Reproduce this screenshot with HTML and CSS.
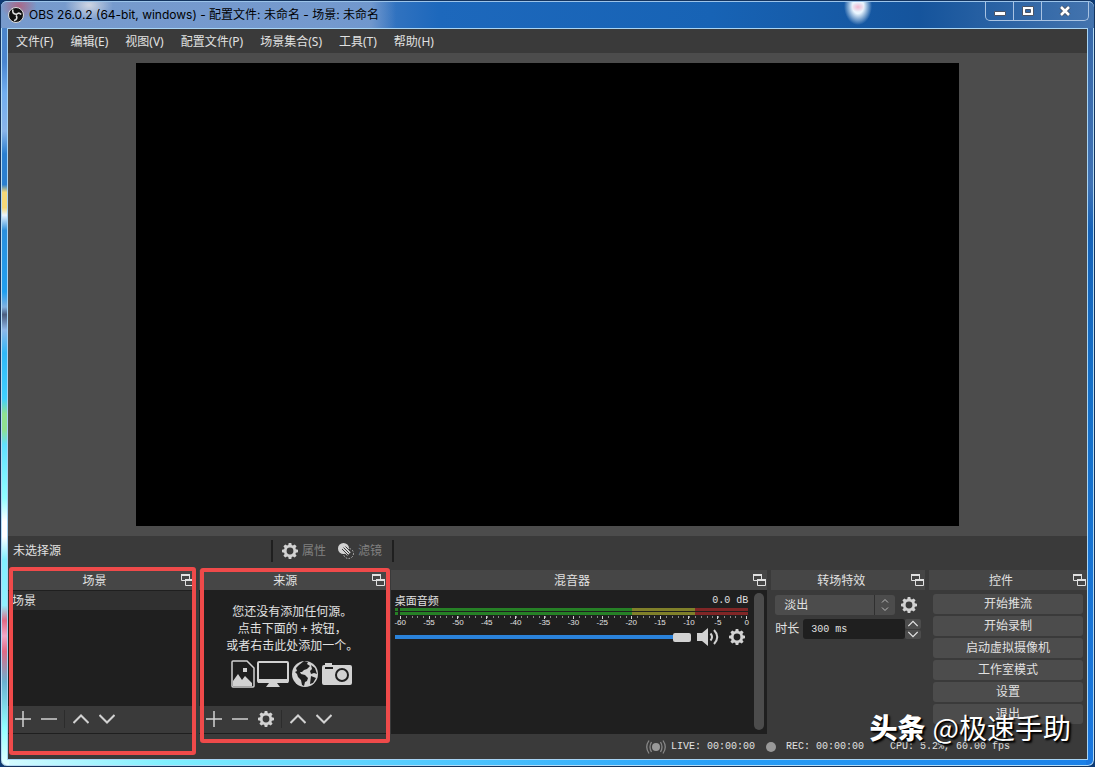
FILE: index.html
```html
<!DOCTYPE html>
<html lang="zh-CN">
<head>
  <meta charset="UTF-8" />
  <meta name="viewport" content="width=device-width, initial-scale=1" />
  <title>OBS 26.0.2 (64-bit, windows)</title>
  <link rel="stylesheet" href="styles.css">
</head>
<body>

  <!-- shared icons -->
  <svg class="sprite" aria-hidden="true">
    <symbol id="gear" viewBox="0 0 16 16">
      <path fill="currentColor" fill-rule="evenodd" d="M6.700 0h2.600l.4 2.100 1.200.5 1.800-1.200 1.900 1.900-1.200 1.800.5 1.200 2.100.4v2.600l-2.100.4-.5 1.200 1.200 1.800-1.900 1.900-1.800-1.200-1.200.5-.4 2.100H6.700l-.4-2.100-1.200-.5-1.800 1.200-1.900-1.900 1.200-1.800-.5-1.200L0 9.300V6.700l2.100-.4.5-1.200-1.200-1.800 1.900-1.900 1.800 1.200 1.200-.5zM8 4.600a3.400 3.400 0 1 0 0 6.800 3.400 3.400 0 0 0 0-6.800z"/>
    </symbol>
    <symbol id="float" viewBox="0 0 14 14">
      <path fill="none" stroke="currentColor" d="M5 7.500H.5v-6h8V6M4.500 6.500h8v6h-8z"/>
      <path fill="currentColor" d="M0 1h9v2H0zM4 6h9v2H4z"/>
    </symbol>
    <symbol id="plus" viewBox="0 0 16 16"><path stroke="currentColor" stroke-width="1.500" d="M8 0v16M0 8h16"/></symbol>
    <symbol id="minus" viewBox="0 0 16 16"><path stroke="currentColor" stroke-width="1.500" d="M0 8h16"/></symbol>
    <symbol id="up" viewBox="0 0 16 16"><path fill="none" stroke="currentColor" stroke-width="2" d="M.5 12 8 4.500l7.500 7.500"/></symbol>
    <symbol id="down" viewBox="0 0 16 16"><path fill="none" stroke="currentColor" stroke-width="2" d="M.5 4 8 11.500 15.500 4"/></symbol>
  </svg>

  <div class="window">
    <header class="titlebar">
      <svg class="logo" viewBox="0 0 16 16">
        <circle cx="8" cy="8" r="7.500" fill="#111" stroke="#ddd"/>
        <g fill="none" stroke="#ddd" stroke-width="1.600">
          <path d="M5 2.500c-1 2.500.3 4.500 3 4.800"/>
          <path d="M13.200 7.500c-1.800-2-4.200-1.700-5.200.7"/>
          <path d="M6 13.500c2.700-.5 3.600-2.900 2.200-5"/>
        </g>
      </svg>
      <h1 class="title">OBS 26.0.2 (64-bit, windows) - 配置文件: 未命名 - 场景: 未命名</h1>
      <div class="caption">
        <button aria-label="最小化"><svg width="12" height="12"><path fill="#fff" stroke="#4a5568" d="M.5 6.500h11v4H.5z"/></svg></button>
        <button aria-label="最大化"><svg width="12" height="12"><path fill="#fff" stroke="#4a5568" fill-rule="evenodd" d="M.5 1.500h11v9H.5zM3.500 4.500h5v3h-5z"/></svg></button>
        <button aria-label="关闭" class="close"><svg width="12" height="12"><path stroke="#4a5568" stroke-width="4.500" d="M2 2l8 8M10 2l-8 8"/><path stroke="#fff" stroke-width="2.500" d="M2 2l8 8M10 2l-8 8"/></svg></button>
      </div>
    </header>

    <div class="client">
      <nav class="menubar">
        <button>文件(F)</button>
        <button>编辑(E)</button>
        <button>视图(V)</button>
        <button>配置文件(P)</button>
        <button>场景集合(S)</button>
        <button>工具(T)</button>
        <button>帮助(H)</button>
      </nav>

      <main class="preview"><div class="canvas"></div></main>

      <div class="context-bar">
        <span class="context-label">未选择源</span>
        <div class="context-tools">
          <button disabled><svg class="icon"><use href="#gear"/></svg>属性</button>
          <button disabled>
            <svg class="icon" viewBox="0 0 16 16">
              <circle cx="10.500" cy="10.500" r="5" fill="none" stroke="#bbb" stroke-dasharray="1.500 1.500"/>
              <circle cx="5.500" cy="5.500" r="5.500" fill="#d2d2d2"/>
              <path stroke="#d2d2d2" stroke-width="5" d="M7 7l4 4"/>
              <path stroke="#3a3a3a" d="M4 6l6 6M5.500 4.500l6 6M7.500 3.500l5 5"/>
            </svg>滤镜</button>
        </div>
      </div>

      <div class="docks">
        <section class="dock scenes">
          <h2>场景<svg class="float"><use href="#float"/></svg></h2>
          <ul class="list"><li>场景</li></ul>
          <div class="toolbar">
            <button aria-label="添加场景"><svg class="icon"><use href="#plus"/></svg></button>
            <button aria-label="移除场景"><svg class="icon"><use href="#minus"/></svg></button>
            <i class="sep"></i>
            <button aria-label="上移"><svg class="icon"><use href="#up"/></svg></button>
            <button aria-label="下移"><svg class="icon"><use href="#down"/></svg></button>
          </div>
          <div class="mark"></div>
        </section>

        <section class="dock sources">
          <h2>来源<svg class="float"><use href="#float"/></svg></h2>
          <div class="list empty">
            <p>您还没有添加任何源。<br>点击下面的 + 按钮，<br>或者右击此处添加一个。</p>
            <div class="kinds">
              <svg width="24" height="28" viewBox="0 0 24 28">
                <path fill="none" stroke="#d2d2d2" stroke-width="1.500" d="M2 1h14l7 7v18a1 1 0 0 1-1 1H2a1 1 0 0 1-1-1V2a1 1 0 0 1 1-1z"/>
                <path fill="#d2d2d2" d="M2 26v-5l5-7 4 6 3-4 7 7v3zM12 8h4v4h-4z"/>
              </svg>
              <svg width="32" height="28" viewBox="0 0 32 28">
                <rect x="1" y="2" width="30" height="20" rx="1" fill="none" stroke="#d2d2d2" stroke-width="2"/>
                <path fill="#d2d2d2" d="M1 19h30v4H1zM12 23h8l3 4H9z"/>
              </svg>
              <svg width="28" height="28" viewBox="0 0 28 28">
                <circle cx="14" cy="14" r="13" fill="#d2d2d2"/>
                <path fill="#1f1f1f" d="M13 1l4 1-1 2 3 2-3 3-3 1-2 2-2 0 1 2 4 1 3 3-1 3-2 1-1 4-2-1-1-5-3-3-1-3-2-2 2-1-1-3 3-3zM20 5l4 3 2 6-3-1-3 1-1-3 2-2zM20 16l5 2-3 5-3 1z"/>
              </svg>
              <svg width="32" height="28" viewBox="0 0 32 28">
                <path fill="#d2d2d2" fill-rule="evenodd" d="M4 3h7v2h18a2 2 0 0 1 2 2v16a2 2 0 0 1-2 2H3a2 2 0 0 1-2-2V7a2 2 0 0 1 2-2h1zM4 7v2h8V7zM21 8a7 7 0 1 0 0 14 7 7 0 0 0 0-14zM21 10a5 5 0 1 1 0 10 5 5 0 0 1 0-10z"/>
              </svg>
            </div>
          </div>
          <div class="toolbar">
            <button aria-label="添加源"><svg class="icon"><use href="#plus"/></svg></button>
            <button aria-label="移除源"><svg class="icon"><use href="#minus"/></svg></button>
            <button aria-label="源属性"><svg class="icon"><use href="#gear"/></svg></button>
            <i class="sep"></i>
            <button aria-label="上移"><svg class="icon"><use href="#up"/></svg></button>
            <button aria-label="下移"><svg class="icon"><use href="#down"/></svg></button>
          </div>
          <div class="mark"></div>
        </section>

        <section class="dock mixer">
          <h2>混音器<svg class="float"><use href="#float"/></svg></h2>
          <div class="mixer-body">
            <div class="channel">
              <div class="channel-head"><label for="volume">桌面音频</label><span class="mono">0.0 dB</span></div>
              <div class="meter"></div>
              <div class="meter"></div>
              <div class="scale">
                <span>-60</span><span>-55</span><span>-50</span><span>-45</span><span>-40</span><span>-35</span><span>-30</span><span>-25</span><span>-20</span><span>-15</span><span>-10</span><span>-5</span><span>0</span>
              </div>
              <div class="channel-controls">
                <input id="volume" class="slider" type="range" min="0" max="100" value="100">
                <button aria-label="静音">
                  <svg width="22" height="18" viewBox="0 0 22 18">
                    <path fill="#d2d2d2" d="M0 5h5l6-5v18l-6-5H0z"/>
                    <path fill="none" stroke="#d2d2d2" stroke-width="2" d="M13.500 5.500q3 3.500 0 7M17 2q6.500 7 0 14"/>
                  </svg>
                </button>
                <button aria-label="音频设置"><svg class="icon"><use href="#gear"/></svg></button>
              </div>
            </div>
            <div class="scrollbar"></div>
          </div>
        </section>

        <section class="dock transitions">
          <h2>转场特效<svg class="float"><use href="#float"/></svg></h2>
          <div class="row">
            <div class="combo">
              <select aria-label="转场特效"><option>淡出</option></select>
              <svg class="combo-arrows" viewBox="0 0 8 14"><path fill="none" stroke="#bbb" d="M1 4.500l3-3 3 3M1 9.500l3 3 3-3"/></svg>
            </div>
            <button aria-label="转场属性"><svg class="icon"><use href="#gear"/></svg></button>
          </div>
          <div class="row">
            <label for="duration">时长</label>
            <div class="spin">
              <input id="duration" class="mono" type="text" value="300 ms">
              <div class="spin-buttons">
                <button aria-label="增加"><svg viewBox="0 3 16 10"><use href="#up" width="16" height="16"/></svg></button>
                <button aria-label="减少"><svg viewBox="0 3 16 10"><use href="#down" width="16" height="16"/></svg></button>
              </div>
            </div>
          </div>
        </section>

        <section class="dock controls">
          <h2>控件<svg class="float"><use href="#float"/></svg></h2>
          <div class="control-list">
            <button>开始推流</button>
            <button>开始录制</button>
            <button>启动虚拟摄像机</button>
            <button>工作室模式</button>
            <button>设置</button>
            <button>退出</button>
          </div>
        </section>
      </div>

      <footer class="statusbar mono">
        <svg width="20" height="14" viewBox="0 0 20 14">
          <circle cx="10" cy="7" r="4" fill="#999"/>
          <path fill="none" stroke="#888" stroke-width="1.300" d="M5.500 2q-3 5 0 10M3 .5q-4.500 6.500 0 13M14.500 2q3 5 0 10M17 .5q4.500 6.500 0 13"/>
        </svg>
        <span class="live">LIVE: 00:00:00</span>
        <i class="dot"></i>
        <span class="rec">REC: 00:00:00</span>
        <span class="cpu">CPU: 5.2%, 60.00 fps</span>
      </footer>
    </div>

    <div class="watermark"><b>头条</b><span>@极速手助</span></div>
  </div>

</body>
</html>
```
FILE: styles.css
```css
* {
  margin: 0;
  padding: 0;
  box-sizing: border-box;
}

body {
  font-family: "Noto Sans", "Noto Sans CJK SC", sans-serif;
  font-size: 12px;
  line-height: 16px;
  color: #e1e1e1;
  background: #0d3a75;
}

button {
  font: inherit;
  color: inherit;
  border: 0;
  background: none;
}

svg {
  display: block;
  flex: none;
}

.sprite {
  position: absolute;
  width: 0;
  height: 0;
}

.icon {
  width: 16px;
  height: 16px;
  color: #d2d2d2;
}

.mono {
  font-family: "Liberation Mono", monospace;
  font-size: 10px;
}

/* window frame */
.window {
  position: relative;
  display: flex;
  flex-direction: column;
  height: 100vh;
  padding: 0 6px 6px;
  border: 1px solid #14345f;
  border-radius: 7px;
  box-shadow: inset 0 0 0 1px #b5dcf5;
  background:
    linear-gradient(#4c83c4, #4a86d0 8%, #71aef0 12%, #8ab4e8 17%, #2a7fd0 20%, #2a7fd0 24%, #f5d878 25%, #f5d878 27%, #eaf4ff 28%, #2b8fdc 30%, #20a0f0 38%, #7fb0e0 40%, #4a5e80 41%, #8fb8e8 43%, #30b8f8 46%, #40d0ff 52%, #90e090 54%, #90e090 56%, #60e0ff 58%, #90ffff 65%, #fff 68%, #fff 70%, #80f0ff 73%, #90f0ff 79%, #e06a85 81%, #f0a8c8 83%, #e06a85 85%, #6ab0d0 89%, #90ffff 95%, #e8ffff) left / 8px 100% no-repeat,
    linear-gradient(#3768a8, #3f72b4 24%, #1562b8 30%, #1470c8 50%, #1a78e0) right / 8px 100% no-repeat,
    linear-gradient(90deg, #d8fbff, #80f0ff 15%, #50c8ff 40%, #28a0f8 65%, #1a80e8) bottom / 100% 8px no-repeat,
    #1b66b5;
}

.titlebar {
  display: flex;
  align-items: center;
  height: 27px;
  flex: none;
  margin: 0 -6px;
  padding-left: 7px;
  border-radius: 6px 6px 0 0;
  border-top: 1px solid #9cc4ea;
  background:
    radial-gradient(ellipse 7px 5px at 857px 5px, #f0b8d0, transparent),
    radial-gradient(ellipse 14px 19px at 857px 4px, #eaf6ff 40%, transparent),
    radial-gradient(ellipse 18px 14px at 18px 4px, #b85a75cc, transparent),
    radial-gradient(ellipse 24px 16px at 88px 3px, #e6e4e8cc, transparent),
    linear-gradient(90deg, #7d9fd0cc, #7d9fd0cc 370px, transparent 395px),
    linear-gradient(90deg, #6089c0, #4f82c5 30%, #1d68bc 40%, #1763b5 65%, #15549c 84%, #4474ae);
}

.logo {
  width: 16px;
  height: 16px;
}

.title {
  margin-left: 5px;
  font-family: Inter, "Noto Sans CJK SC", sans-serif;
  font-size: 12px;
  font-weight: 400;
  color: #000;
  white-space: nowrap;
}

.caption {
  display: flex;
  align-self: flex-start;
  margin: 0 5px 0 auto;
  border: 1px solid #a9c3e2;
  border-top: 0;
  border-radius: 0 0 5px 5px;
}

.caption button {
  display: flex;
  align-items: center;
  justify-content: center;
  width: 28px;
  height: 18px;
  border-right: 1px solid #a9c3e2;
}

.caption .close {
  width: 46px;
  border-right: 0;
}

.client {
  flex: 1;
  min-height: 0;
  display: flex;
  flex-direction: column;
  border: 1px solid #a8d4f4;
  background: #3a3a3a;
}

.menubar {
  display: flex;
  flex: none;
  height: 24px;
  padding: 2px 0 0 8px;
  gap: 17px;
}

.preview {
  flex: 1;
  min-height: 0;
  display: flex;
  justify-content: center;
  padding: 10px;
  background: #4c4c4c;
}

.canvas {
  height: 100%;
  aspect-ratio: 16 / 9;
  background: #000;
}

/* source toolbar */
.context-bar {
  display: flex;
  align-items: center;
  flex: none;
  height: 34px;
  padding: 0 5px 4px;
}

.context-label {
  width: 258px;
}

.context-tools {
  display: flex;
  gap: 12px;
  padding: 3px 10px 3px 9px;
  border: solid #1f1f1f;
  border-width: 0 2px;
}

.context-tools button {
  display: flex;
  align-items: center;
  gap: 4px;
  color: #808080;
}

/* docks */
.docks {
  display: flex;
  flex: none;
  height: 164px;
  gap: 4px;
}

.dock {
  position: relative;
  display: flex;
  flex-direction: column;
  min-width: 0;
}

.dock h2 {
  display: flex;
  align-items: center;
  justify-content: center;
  position: relative;
  flex: none;
  height: 20px;
  padding: 1px 14px 0 0;
  font-size: 12px;
  font-weight: 400;
  background: #464646;
}

.float {
  position: absolute;
  right: 0;
  top: 3px;
  width: 14px;
  height: 14px;
}

.scenes {
  flex: 187;
}

.sources {
  flex: 187;
  margin-right: 1px;
}

.mixer {
  flex: 377;
}

.transitions {
  flex: 154;
}

.controls {
  flex: 158;
}

.list {
  flex: 1;
  padding: 0 4px;
  list-style: none;
  background: #1f1f1f;
  border-top: 1px solid #1f1f1f;
}

.list li {
  height: 19px;
  line-height: 19px;
  margin: 0 -4px;
  padding-left: 4px;
  background: #303030;
}

.empty {
  display: flex;
  flex-direction: column;
  align-items: center;
  padding-top: 12px;
  text-align: center;
}

.empty p {
  line-height: 17px;
  white-space: nowrap;
}

.kinds {
  display: flex;
  gap: 2px;
  margin-top: 6px;
}

.toolbar {
  display: flex;
  align-items: center;
  flex: none;
  gap: 10px;
  height: 28px;
  padding: 0 0 2px 7px;
  border-bottom: 1px solid #1f1f1f;
}

.sep {
  width: 1px;
  height: 18px;
  margin: 0 -2px 0 -3px;
  background: #2c2c2c;
}

/* red highlight frames */
.mark {
  position: absolute;
  inset: -3px -1px -21px 1px;
  border: 4px solid #ef4a4a;
  border-radius: 3px;
}

.sources .mark {
  inset: -2px -4px -9px 1px;
}

/* mixer */
.mixer-body {
  flex: 1;
  display: flex;
  gap: 6px;
  padding: 3px 3px 4px 4px;
  background: #1f1f1f;
}

.channel {
  flex: 1;
}

.channel-head {
  display: flex;
  justify-content: space-between;
  height: 15px;
  line-height: 15px;
}

.channel-head label {
  font-size: 11px;
}

.meter {
  height: 3px;
  margin-bottom: 1px;
  background: linear-gradient(90deg, #268026 3px, #1f1f1f 3px 5px, #268026 5px 67%, #80802a 67% 85%, #802626 85%);
}

.scale {
  display: flex;
  justify-content: space-between;
  height: 11px;
  margin: 0 1px 0 5px;
  background: repeating-linear-gradient(90deg, #888 0 1px, transparent 1px calc(100% / 60)) top / 100% 2px no-repeat;
}

.scale span {
  display: flex;
  flex-direction: column;
  align-items: center;
  width: 1px;
  font-family: "Liberation Sans", sans-serif;
  font-size: 8px;
  line-height: 8px;
}

.scale span::before {
  content: "";
  flex: none;
  width: 1px;
  height: 3px;
  background: #d2d2d2;
}

.channel-controls {
  display: flex;
  align-items: center;
  gap: 10px;
  height: 20px;
  padding-right: 3px;
}

.slider {
  flex: 1;
  min-width: 0;
  height: 10px;
  margin-right: -4px;
  appearance: none;
  border-radius: 2px;
  background: linear-gradient(#2a82da, #2a82da) center / 100% 4px no-repeat;
}

.slider::-webkit-slider-thumb {
  appearance: none;
  width: 18px;
  height: 9px;
  border-radius: 2px;
  background: #d2d2d2;
}

.scrollbar {
  width: 10px;
  border-radius: 5px;
  background: #4c4c4c;
}

/* transitions */
.row {
  display: flex;
  align-items: center;
  gap: 6px;
  height: 20px;
  margin: 4px 4px 0;
}

.row label {
  white-space: nowrap;
}

.dock h2 + .row {
  margin-top: 5px;
}

.combo {
  position: relative;
  width: 120px;
}

.combo select {
  appearance: none;
  width: 100%;
  height: 20px;
  padding-left: 9px;
  font: inherit;
  color: inherit;
  border: 0;
  border-radius: 3px;
  background: linear-gradient(90deg, #4c4c4c 99px, #303030 99px 100px, #4c4c4c 100px);
}

.combo-arrows {
  position: absolute;
  right: 6px;
  top: 3px;
  width: 8px;
  height: 14px;
}

.spin {
  display: flex;
  width: 118px;
  height: 20px;
}

.row label + .spin {
  margin-left: -2px;
}

.spin input {
  flex: 1;
  min-width: 0;
  padding-left: 8px;
  color: inherit;
  border: 0;
  border-radius: 3px;
  background: #1f1f1f;
}

.spin-buttons {
  display: grid;
  gap: 1px;
  width: 16px;
}

.spin-buttons button {
  display: grid;
  place-items: center;
  border-radius: 2px;
  background: #4c4c4c;
}

.spin-buttons svg {
  width: 10px;
  height: 7px;
}

/* controls */
.control-list {
  display: grid;
  gap: 2px;
  padding: 4px 4px 0;
}

.control-list button {
  height: 20px;
  border-radius: 3px;
  background: #4c4c4c;
}

.statusbar {
  display: flex;
  align-items: center;
  justify-content: flex-end;
  flex: none;
  height: 25px;
  padding-right: 77px;
  white-space: pre;
}

.live {
  margin: 0 11px 0 5px;
}

.dot {
  width: 10px;
  height: 10px;
  border-radius: 50%;
  background: #999;
}

.rec {
  margin: 0 26px 0 10px;
}

.watermark {
  position: absolute;
  right: 23px;
  bottom: 19px;
  display: flex;
  align-items: center;
  gap: 7px;
  font-family: "Noto Sans CJK SC", sans-serif;
  font-size: 28px;
  line-height: 40px;
  color: #fff;
  text-shadow: 1px 1px 1px #000, 2px 2px 2px #000;
}

.watermark b {
  font-weight: 900;
}
```
